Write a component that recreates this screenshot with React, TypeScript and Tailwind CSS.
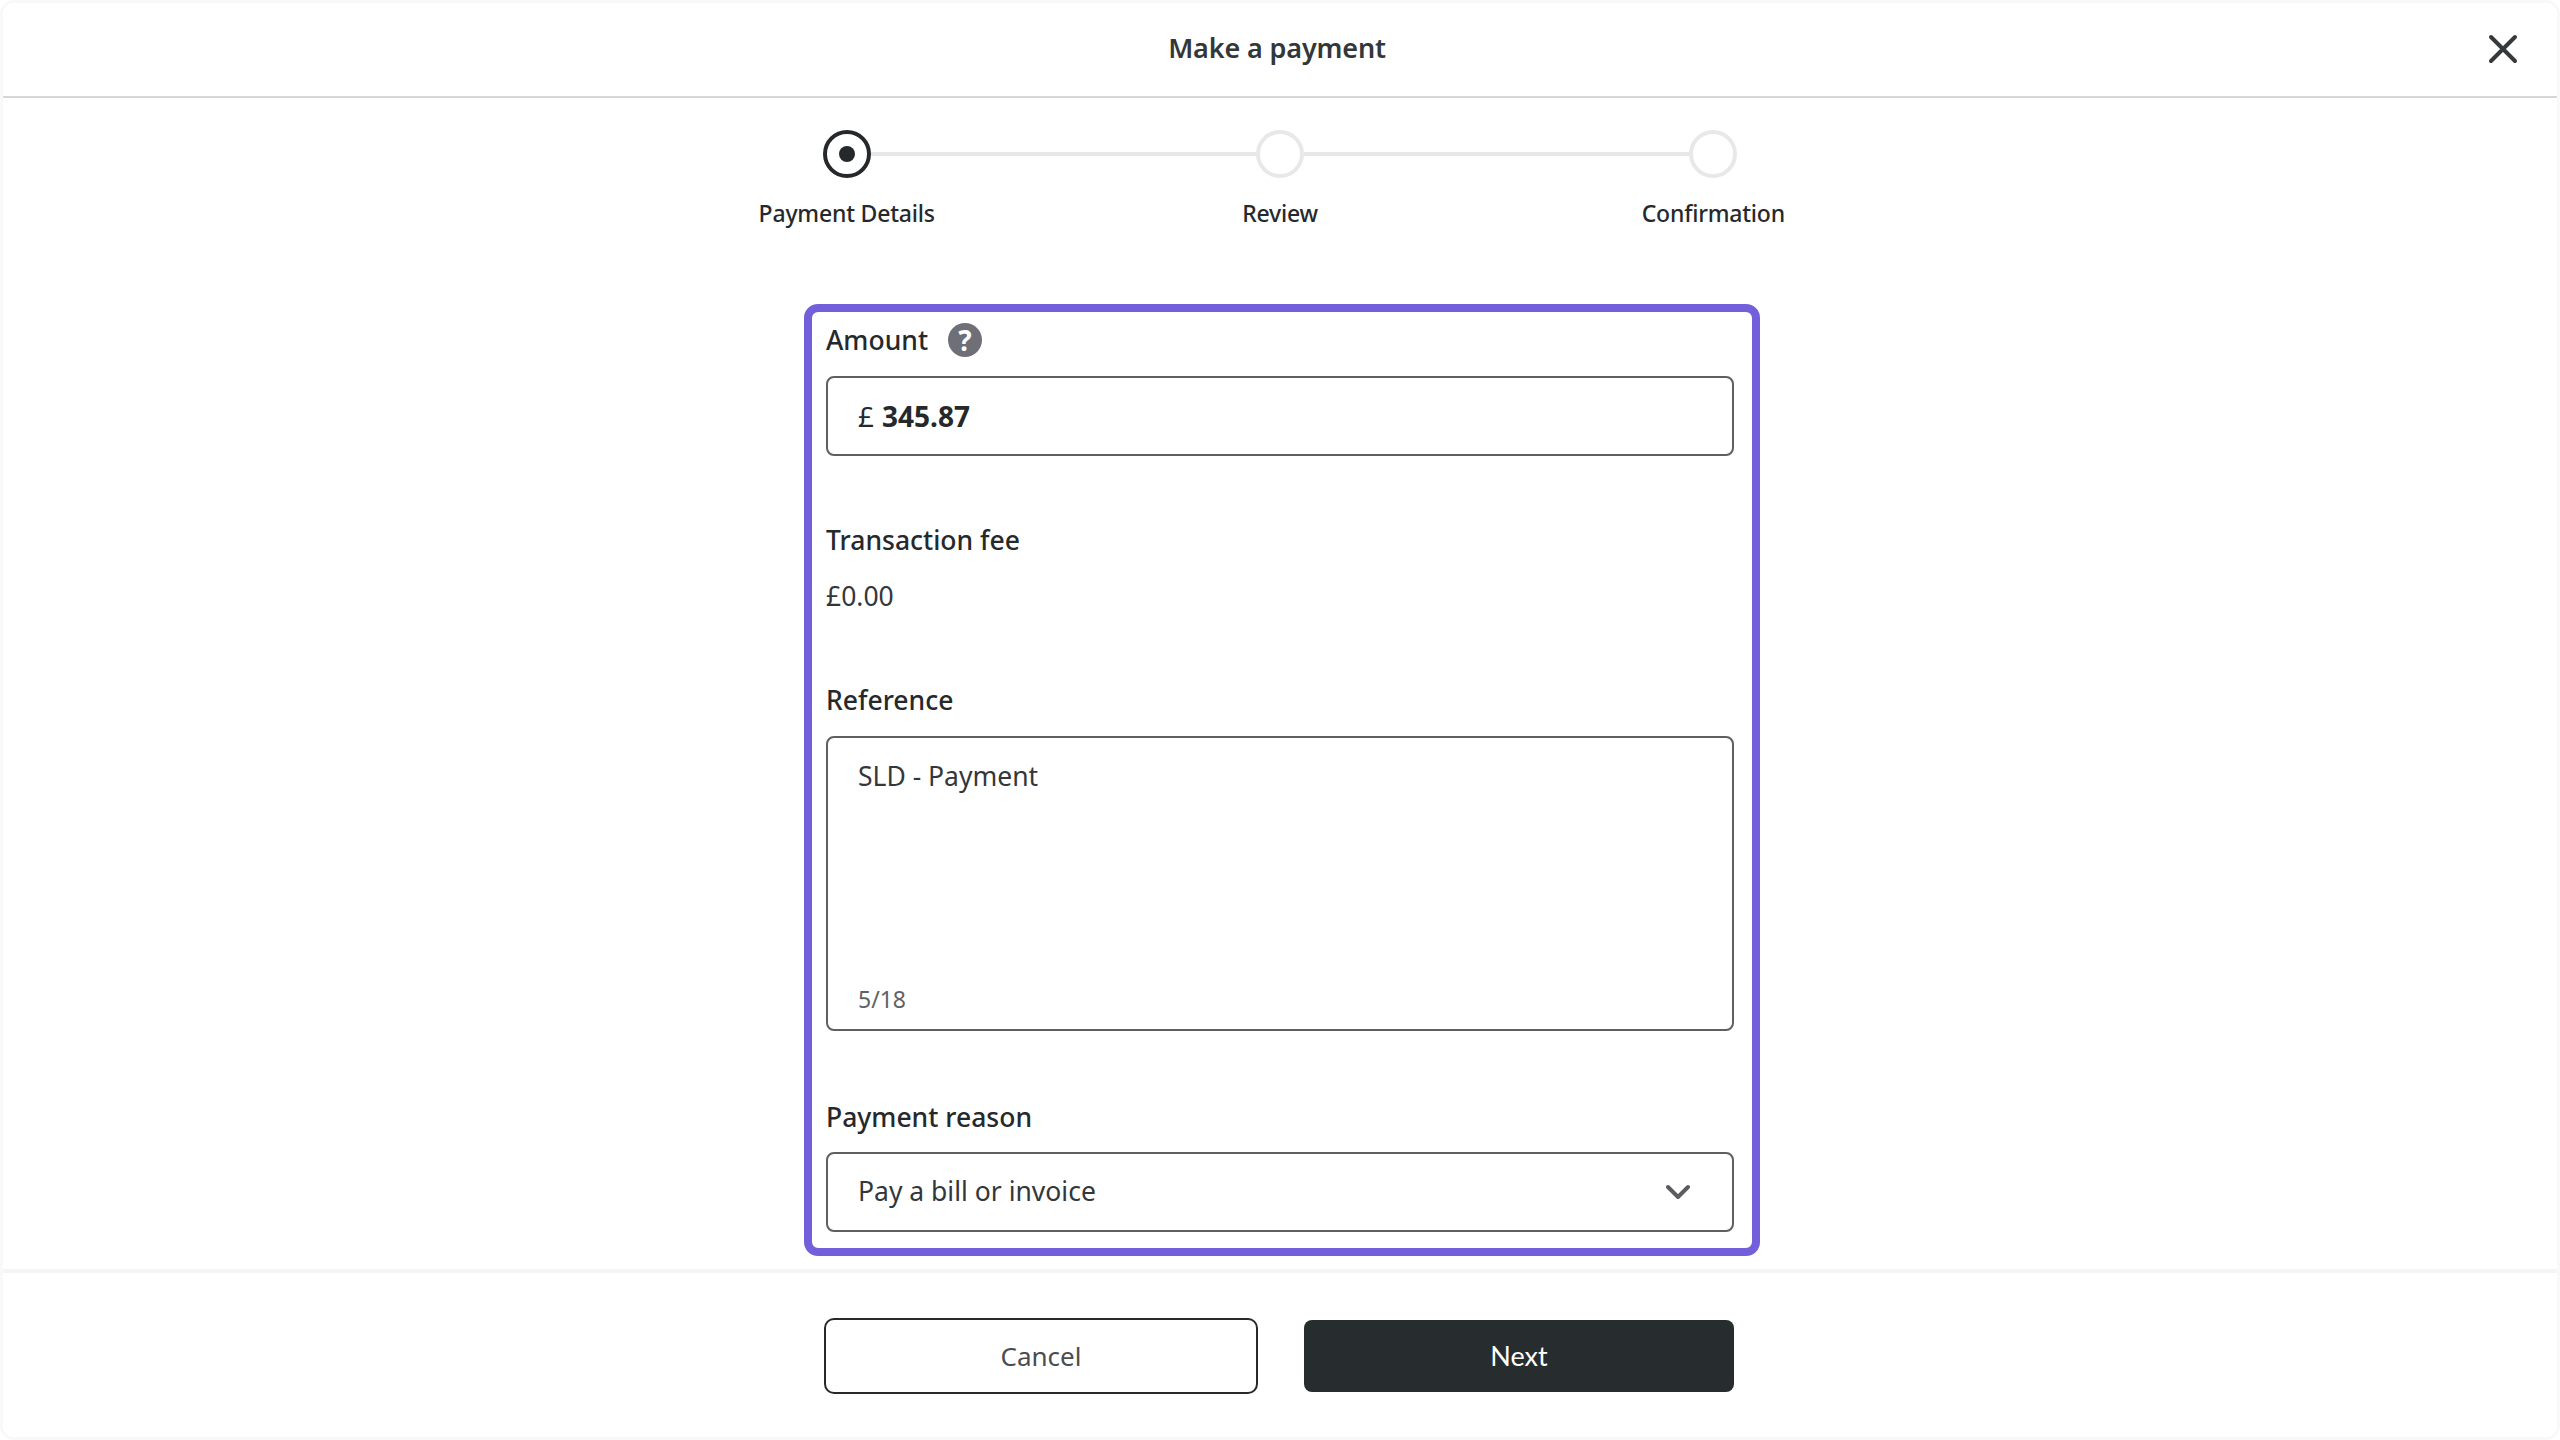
import React from "react";

const font = { fontFamily: '"Noto Sans", "Open Sans", sans-serif' };

function Field({ label, children, className = "" }: { label: React.ReactNode; children: React.ReactNode; className?: string }) {
  return (
    <div className={className}>
      <div className="h-[40px] flex items-center gap-[20px] text-[26.5px] leading-[40px] font-medium text-[#26292b]">{label}</div>
      {children}
    </div>
  );
}

function Step({ label }: { label: string }) {
  return <div className="text-center text-[23px] leading-[32px] font-medium text-[#26292b] tracking-[-0.2px]">{label}</div>;
}

export default function App() {
  return (
    <div style={font} className="w-[2560px] h-[1440px] flex flex-col bg-white overflow-hidden border-[3px] border-[#f9f9f9] rounded-[14px] box-border">
      <header className="h-[95px] shrink-0 flex items-center justify-center border-b-2 border-[#d6d6d6] relative">
        <h1 className="text-[27px] leading-[36px] font-semibold text-[#33373a] tracking-[-0.15px] pb-[3px] pr-[6px]">Make a payment</h1>
        <svg className="absolute right-[38px] top-[30px]" width="32" height="32" viewBox="0 0 32 32" fill="none" stroke="#36393b" strokeWidth="4" strokeLinecap="round">
          <path d="M4 4 L28 28 M28 4 L4 28" />
        </svg>
      </header>

      <div className="h-[206px] shrink-0 pt-[32px] flex flex-col items-center">
        <div className="w-[915px] flex items-center pr-[1px]">
          <div className="w-[48px] h-[48px] rounded-full border-[4px] border-[#26292b] flex items-center justify-center">
            <div className="w-[16px] h-[16px] rounded-full bg-[#26292b]" />
          </div>
          <div className="flex-1 h-[4px] bg-[#e8e8e8]" />
          <div className="w-[48px] h-[48px] rounded-full border-[4px] border-[#e8e8e8]" />
          <div className="flex-1 h-[4px] bg-[#e8e8e8]" />
          <div className="w-[48px] h-[48px] rounded-full border-[4px] border-[#e8e8e8]" />
        </div>
        <div className="w-[1300px] grid grid-cols-3 mt-[19px]">
          <Step label="Payment Details" />
          <Step label="Review" />
          <Step label="Confirmation" />
        </div>
      </div>

      <main className="flex-1 flex justify-center items-start pl-[4px]">
        <form className="w-[956px] h-[952px] border-[8px] border-[#725fd9] rounded-[14px] pl-[14px] pr-[18px] pt-[8px] flex flex-col box-border">
          <Field label={<><span>Amount</span><span className="w-[34px] h-[34px] rounded-full bg-[#6f6f78] text-white text-[28px] font-bold leading-none flex items-center justify-center">?</span></>}>
            <div className="mt-[16px] h-[80px] border-2 border-[#5f5f5f] rounded-[8px] px-[30px] flex items-center text-[28px] text-[#26292b]">
              <span className="font-normal">£</span>
              <span className="ml-[8px] font-bold">345.87</span>
            </div>
          </Field>

          <Field label="Transaction fee" className="mt-[64px]">
            <div className="mt-[16px] h-[40px] text-[26.5px] leading-[40px] text-[#33373a]">£0.00</div>
          </Field>

          <Field label="Reference" className="mt-[64px]">
            <div className="mt-[16px] h-[295px] border-2 border-[#5f5f5f] rounded-[8px] px-[30px] pt-[20px] pb-[15px] flex flex-col justify-between">
              <span className="text-[26.5px] leading-[36px] text-[#33373a]">SLD - Payment</span>
              <span className="text-[23px] leading-[30px] text-[#5f6164]">5/18</span>
            </div>
          </Field>

          <Field label="Payment reason" className="mt-[66px]">
            <div className="mt-[15px] h-[80px] border-2 border-[#5f5f5f] rounded-[8px] pl-[30px] pr-[42px] flex items-center justify-between text-[26.5px] text-[#33373a]">
              <span>Pay a bill or invoice</span>
              <svg width="24" height="16" viewBox="0 0 24 16" fill="none" stroke="#5b5c60" strokeWidth="4" strokeLinecap="round" strokeLinejoin="round">
                <path d="M2 3 L12 13 L22 3" />
              </svg>
            </div>
          </Field>
        </form>
      </main>

      <footer className="h-[168px] shrink-0 border-t-4 border-[#f5f5f5] flex items-start justify-center pt-[45px] pr-[2px] gap-[46px]">
        <button className="w-[434px] h-[76px] border-2 border-[#26292b] rounded-[10px] bg-white text-[26px] text-[#4a4d50]">Cancel</button>
        <button className="w-[430px] h-[72px] mt-[2px] rounded-[8px] bg-[#272c2f] text-white text-[27px]" style={{ fontFamily: '"Lato", sans-serif' }}>Next</button>
      </footer>
    </div>
  );
}
